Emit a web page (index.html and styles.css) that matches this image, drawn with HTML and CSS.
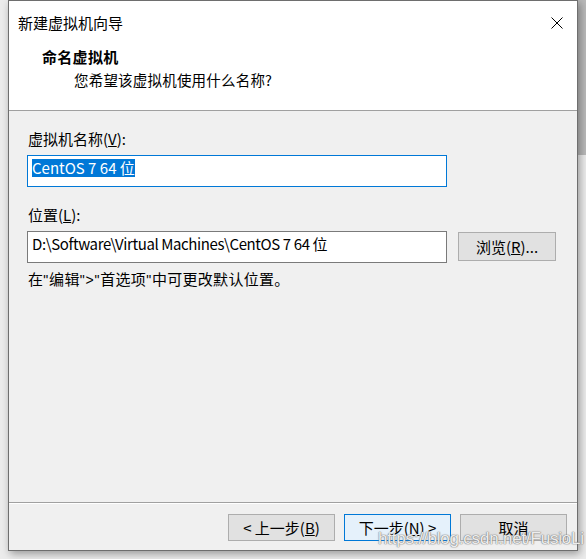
FILE: index.html
```html
<!DOCTYPE html>
<html lang="zh-CN">
<head>
<meta charset="utf-8">
<title>新建虚拟机向导</title>
<link rel="stylesheet" href="styles.css">
</head>
<body>
<div class="page">
  <div class="bgbar"></div>
  <div class="window">
    <div class="header">
      <div class="titlebar">
        <span class="title">新建虚拟机向导</span>
        <svg class="close" width="12" height="12" viewBox="0 0 12 12"><path d="M0.5 0.5 L11.5 11.5 M11.5 0.5 L0.5 11.5" stroke="#000" stroke-width="1" fill="none"/></svg>
      </div>
      <div class="heading">命名虚拟机</div>
      <div class="subheading">您希望该虚拟机使用什么名称?</div>
    </div>
    <div class="body">
      <div class="label">虚拟机名称(<u>V</u>):</div>
      <div class="field focused"><span class="sel">CentOS 7 64 位</span></div>
      <div class="label label-gap">位置(<u>L</u>):</div>
      <div class="row">
        <div class="field path">D:\Software\Virtual Machines\CentOS 7 64 位</div>
        <div class="btn browse">浏览(<u>R</u>)...</div>
      </div>
      <div class="hint">在<span class="q">"</span>编辑<span class="q">"&gt;"</span>首选项<span class="q">"</span>中可更改默认位置。</div>
    </div>
    <div class="footer">
      <div class="btn">&lt; 上一步(<u>B</u>)</div>
      <div class="btn default">下一步(<u>N</u>) &gt;</div>
      <div class="btn">取消</div>
    </div>
  </div>
  <div class="watermark">https://blog.csdn.net/FusioLi</div>
</div>
</body>
</html>
```

FILE: styles.css
```css
* { box-sizing: border-box; }
html, body {
  margin: 0;
  padding: 0;
  background: #ececec;
}
body {
  width: 586px;
  height: 559px;
  overflow: hidden;
  font-family: "Noto Sans CJK SC", "Noto Sans", sans-serif;
  font-size: 15px;
  color: #000;
}
.page {
  position: relative;
  width: 586px;
  height: 559px;
  padding-left: 8px;
}
.bgbar {
  position: absolute;
  left: 578px;
  top: 0;
  width: 8px;
  height: 155px;
  background: #b9b9b9;
}
.window {
  position: relative;
  width: 570px;
  height: 551px;
  border: 1px solid #6e6e6e;
  background: #f0f0f0;
  display: flex;
  flex-direction: column;
  box-shadow: 2px 3px 8px rgba(0,0,0,0.35);
}
.header {
  height: 110px;
  background: #fff;
  border-bottom: 1px solid #a0a0a0;
  flex: none;
}
.titlebar {
  height: 28px;
  margin-top: 8px;
  padding-left: 9px;
  padding-right: 14px;
  display: flex;
  justify-content: space-between;
  align-items: center;
  line-height: 20px;
}
.close { display: block; }
.heading {
  margin-top: 10px;
  padding-left: 33px;
  font-weight: bold;
  line-height: 20px;
  letter-spacing: 0.3px;
}
.subheading {
  margin-top: 3px;
  padding-left: 65px;
  font-size: 14.5px;
  line-height: 20px;
  letter-spacing: 0.2px;
}
.body {
  flex: 1;
  padding: 18px 0 0 18px;
  display: flex;
  flex-direction: column;
  align-items: flex-start;
}
.label {
  line-height: 20px;
  padding-left: 1px;
}
.label-gap { margin-top: 18px; }
.field {
  margin-top: 6px;
  width: 420px;
  height: 32px;
  border: 1px solid #7a7a7a;
  background: #fff;
  padding: 3px 0 0 4px;
  line-height: 18px;
  white-space: nowrap;
}
.field.path { letter-spacing: -0.4px; }
.field.focused { border-color: #0078d7; }
.sel {
  background: #0078d7;
  color: #fff;
  display: inline-block;
  line-height: 18px;
}
.row {
  display: flex;
  align-items: flex-start;
}
.btn {
  width: 107px;
  height: 27px;
  border: 1px solid #adadad;
  background: #e1e1e1;
  display: flex;
  align-items: center;
  justify-content: center;
  line-height: 20px;
}
.browse {
  width: 98px;
  height: 29px;
  margin-left: 11px;
  margin-top: 7px;
}
.hint {
  margin-top: 6px;
  line-height: 20px;
  padding-left: 1px;
  font-size: 15px;
  letter-spacing: 0.3px;
}
.q {
  font-family: "Liberation Sans", Arial, sans-serif;
  font-size: 14px;
  letter-spacing: 0.8px;
}
.footer {
  flex: none;
  height: 48px;
  border-top: 1px solid #a0a0a0;
  box-shadow: inset 0 1px 0 #fff;
  display: flex;
  justify-content: flex-end;
  align-items: flex-start;
  gap: 9px;
  padding: 11px 10px 0 0;
}
.btn.default {
  border-color: #0078d7;
  background: #e5f1fb;
}
.watermark {
  position: absolute;
  left: 378px;
  top: 529px;
  font-family: "Liberation Sans", Arial, sans-serif;
  font-size: 17px;
  letter-spacing: -0.2px;
  color: rgba(255,255,255,0.9);
  text-shadow: 0 0 1px rgba(110,110,110,0.9), 0 0 1px rgba(110,110,110,0.9), 0 0 2px rgba(150,150,150,0.6);
  white-space: nowrap;
}
```
